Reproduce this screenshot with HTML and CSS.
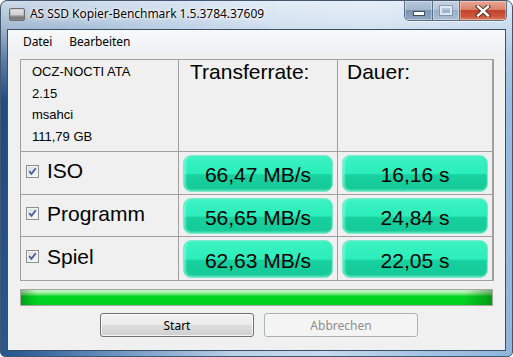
FILE: index.html
```html
<!DOCTYPE html>
<html lang="de">
<head>
<meta charset="utf-8">
<title>AS SSD Kopier-Benchmark</title>
<link rel="stylesheet" href="styles.css">
</head>
<body>
<div class="window">
  <div class="titlebar">
    <svg class="appicon" width="16" height="13" viewBox="0 0 16 13">
      <defs>
        <linearGradient id="hd" x1="0" y1="0" x2="0" y2="1">
          <stop offset="0" stop-color="#d8d8d8"/>
          <stop offset="1" stop-color="#8c8c8c"/>
        </linearGradient>
      </defs>
      <rect x="0.5" y="0.5" width="15" height="12" rx="1.5" fill="url(#hd)" stroke="#6e6e6e"/>
      <path d="M3 2v5M5 2v5M7 2v5M9 2v5M11 2v5M13 2v5" stroke="#f2f2f2" stroke-width="1"/>
      <rect x="1" y="8.5" width="14" height="3" fill="#7a7a7a"/>
    </svg>
    <span class="title">AS SSD Kopier-Benchmark 1.5.3784.37609</span>
    <div class="caption">
      <div class="cbtn cmin"><span class="minbar"></span></div>
      <div class="cbtn cmax"><span class="maxbox"></span></div>
      <div class="cbtn cclose">
        <svg width="16" height="12" viewBox="0 0 16 12">
          <path d="M3 1.5L13 10.5M13 1.5L3 10.5" stroke="#4a2a24" stroke-width="4.2" stroke-linecap="square"/>
          <path d="M3 1.5L13 10.5M13 1.5L3 10.5" stroke="#ffffff" stroke-width="2.4" stroke-linecap="square"/>
        </svg>
      </div>
    </div>
  </div>
  <div class="client">
    <div class="menubar">
      <span class="menuitem">Datei</span>
      <span class="menuitem">Bearbeiten</span>
    </div>
    <div class="content">
      <div class="grid">
        <div class="cell info">
          <div>OCZ-NOCTI ATA</div>
          <div>2.15</div>
          <div>msahci</div>
          <div>111,79 GB</div>
        </div>
        <div class="cell head h2">Transferrate:</div>
        <div class="cell head h3">Dauer:</div>

        <div class="cell label"><span class="check"></span>ISO</div>
        <div class="cell val v2"><div class="pill">66,47 MB/s</div></div>
        <div class="cell val v3"><div class="pill">16,16 s</div></div>

        <div class="cell label"><span class="check"></span>Programm</div>
        <div class="cell val v2"><div class="pill">56,65 MB/s</div></div>
        <div class="cell val v3"><div class="pill">24,84 s</div></div>

        <div class="cell label"><span class="check"></span>Spiel</div>
        <div class="cell val v2"><div class="pill">62,63 MB/s</div></div>
        <div class="cell val v3"><div class="pill">22,05 s</div></div>
      </div>
      <div class="progress"></div>
      <div class="buttons">
        <div class="btn">Start</div>
        <div class="btn disabled">Abbrechen</div>
      </div>
    </div>
  </div>
</div>
</body>
</html>
```
FILE: styles.css
```css
html, body {
  margin: 0;
  padding: 0;
  width: 513px;
  height: 357px;
  overflow: hidden;
  background: #ffffff;
}

.window {
  box-sizing: border-box;
  width: 513px;
  height: 357px;
  border: 1px solid #43576e;
  border-radius: 7px 7px 5px 5px;
  display: flex;
  flex-direction: column;
  background:
    linear-gradient(to bottom, rgba(235,242,250,0.85) 0px, rgba(220,231,243,0.7) 27px, rgba(200,216,234,0.35) 60px, rgba(200,216,234,0.0) 100px),
    linear-gradient(98deg, #1c467c 0%, #2c5b93 12%, #6f96c2 30%, #b9d0e8 50%, #c6daee 66%, #a3c3e4 85%, #8fb5dc 100%);
  overflow: hidden;
}

.titlebar {
  height: 28px;
  display: flex;
  align-items: flex-start;
  flex: none;
}

.appicon {
  margin: 7px 0 0 8px;
  flex: none;
}

.title {
  margin: 5px 0 0 5px;
  font-family: "Noto Sans", "Open Sans", sans-serif;
  font-size: 12px;
  line-height: 16px;
  color: #000;
  text-shadow: 0 0 6px #fff, 0 0 3px #fff, 0 0 1px #fff;
  letter-spacing: -0.05px;
}

.caption {
  margin-left: auto;
  margin-right: 5px;
  display: flex;
  height: 19px;
  border: 1px solid #5b6f85;
  border-top: none;
  border-radius: 0 0 5px 5px;
  overflow: hidden;
  box-shadow: 0 1px 0 rgba(255,255,255,0.6);
}

.cbtn {
  display: flex;
  align-items: center;
  justify-content: center;
  height: 19px;
}

.cmin {
  width: 27px;
  background: linear-gradient(to bottom, #b8c8da 0%, #a4b7cd 45%, #7d95b1 50%, #8ea6c2 100%);
  border-right: 1px solid #5b6f85;
  box-shadow: inset 0 0 0 1px rgba(255,255,255,0.35);
}

.cmax {
  width: 26px;
  background: linear-gradient(to bottom, #c4d2e1 0%, #b3c4d7 45%, #9cb2ca 50%, #a9bdd3 100%);
  border-right: 1px solid #5b6f85;
  box-shadow: inset 0 0 0 1px rgba(255,255,255,0.35);
}

.cclose {
  width: 46px;
  background: linear-gradient(to bottom, #e8a796 0%, #d9826c 45%, #c2432c 50%, #d05a3e 85%, #e08b6a 100%);
  box-shadow: inset 0 0 0 1px rgba(255,230,220,0.4);
}

.minbar {
  display: block;
  width: 10px;
  height: 3px;
  margin-top: 5px;
  background: #fff;
  border: 1px solid #3e4f63;
}

.maxbox {
  display: block;
  width: 8px;
  height: 5px;
  border: 2px solid rgba(230,238,246,0.85);
  outline: 1px solid rgba(110,130,155,0.6);
}

.client {
  flex: none;
  margin: 0 6px 5px 6px;
  height: 320px;
  border: 1px solid #3d4f63;
  background: #f0f0f0;
  display: flex;
  flex-direction: column;
}

.menubar {
  height: 22px;
  display: flex;
  align-items: center;
  gap: 17px;
  padding-left: 15px;
  background: linear-gradient(to bottom, #f8f9fb 0%, #eef1f5 100%);
  font-family: "Noto Sans", "Open Sans", sans-serif;
  font-size: 12px;
  letter-spacing: -0.1px;
  color: #000;
  flex: none;
}

.content {
  padding: 7px 11px 0 12px;
  display: flex;
  flex-direction: column;
}

.grid {
  display: grid;
  grid-template-columns: 157px 158px 154px;
  grid-template-rows: 91px 42px 41px 43px;
  gap: 1px;
  background: #a0a0a0;
  border: 1px solid #a0a0a0;
  width: 472px;
}

.cell {
  background: #f0f0f0;
  font-family: "Liberation Sans", Arial, sans-serif;
  color: #000;
}

.info {
  padding: 1px 0 0 11px;
  font-size: 13px;
  line-height: 21.5px;
}

.head {
  font-size: 21px;
  line-height: 24px;
  padding-top: 0;
}

.h2 { padding-left: 11px; }
.h3 { padding-left: 9px; }

.label {
  display: flex;
  align-items: center;
  font-size: 21px;
  padding: 0 0 4px 5px;
}

.check {
  box-sizing: border-box;
  width: 13px;
  height: 13px;
  margin-right: 8px;
  border: 1px solid #8f8f8f;
  background:
    url("data:image/svg+xml;utf8,<svg xmlns='http://www.w3.org/2000/svg' width='11' height='11' viewBox='0 0 11 11'><path d='M2.2 5.2 L4.4 7.8 L8.8 2.2' fill='none' stroke='%234a5e9a' stroke-width='1.8'/></svg>") center/11px 11px no-repeat,
    linear-gradient(135deg, #d5d8dd 0%, #eceef1 60%, #fafafa 100%);
  box-shadow: inset 0 0 0 1px #f4f4f4;
  flex: none;
}

.val {
  padding: 3px 4px 2px 4px;
  display: flex;
}

.pill {
  flex: 1;
  display: flex;
  align-items: center;
  justify-content: center;
  padding-top: 3px;
  font-size: 21px;
  border-radius: 8px;
  border: 1px solid #7de9c9;
  background:
    linear-gradient(to bottom, #3cf2c3 0%, #2beebb 50%, #17d19f 54%, #14ca98 92%, #44dcb0 100%);
  box-shadow: inset 2px 0 2px rgba(140,255,220,0.6), inset -1px -1px 2px rgba(80,220,180,0.5);
}

.progress {
  margin-top: 8px;
  height: 15px;
  border: 1px solid #a7a7a7;
  width: 471px;
  background:
    linear-gradient(to right, rgba(0,70,0,0.35) 0px, rgba(0,70,0,0) 16px, rgba(0,70,0,0) calc(100% - 28px), rgba(0,70,0,0.4) 100%),
    linear-gradient(to bottom, #c9f7c9 0%, #a4f0a4 18%, #5fe36a 30%, #03d623 42%, #00d020 100%);
}

.buttons {
  margin-top: 7px;
  margin-left: 80px;
  display: flex;
  gap: 10px;
}

.btn {
  box-sizing: border-box;
  width: 154px;
  height: 24px;
  border: 1px solid #707070;
  border-radius: 3px;
  display: flex;
  align-items: center;
  justify-content: center;
  font-family: "Noto Sans", "Open Sans", sans-serif;
  font-size: 12px;
  color: #000;
  background: linear-gradient(to bottom, #f2f2f2 0%, #ebebeb 48%, #dddddd 52%, #cfcfcf 100%);
  box-shadow: inset 0 0 0 1px rgba(255,255,255,0.75);
}

.btn.disabled {
  border-color: #adb2b5;
  background: #f4f4f4;
  color: #8d8d8d;
  box-shadow: none;
}
```
